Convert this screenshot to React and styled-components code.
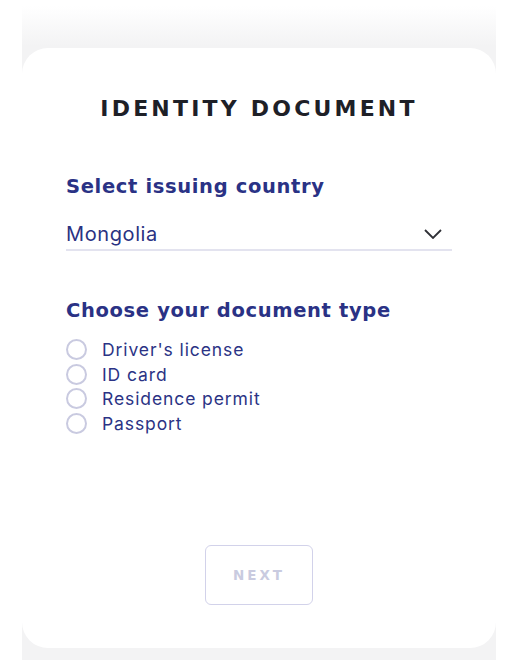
import React, { useState } from 'react';
import styled, { createGlobalStyle } from 'styled-components';

const GlobalStyle = createGlobalStyle`
  html, body {
    margin: 0;
    padding: 0;
    background: #ffffff;
  }
  body {
    font-family: 'Inter', 'Open Sans', sans-serif;
  }
`;

const Page = styled.div`
  width: 522px;
  height: 660px;
  overflow: hidden;
  padding: 0 26px 0 22px;
  box-sizing: border-box;
`;

const Backdrop = styled.div`
  padding: 48px 0 12px;
  background: linear-gradient(to bottom, #ffffff 6px, #f3f3f4 46px);
`;

const Card = styled.div`
  height: 600px;
  background: #ffffff;
  border-radius: 26px;
  padding: 45px 44px 0 44px;
  box-sizing: border-box;
  display: flex;
  flex-direction: column;
`;

const Title = styled.h1`
  margin: 0;
  text-align: center;
  font-family: 'DejaVu Sans', sans-serif;
  font-weight: 700;
  font-size: 22px;
  letter-spacing: 3.2px;
  color: #1e2027;
  line-height: 32px;
`;

const Section = styled.div`
  display: flex;
  flex-direction: column;
  margin-top: ${p => p.$top}px;
`;

const Label = styled.h2`
  margin: 0;
  font-family: 'DejaVu Sans', sans-serif;
  font-weight: 700;
  font-size: 19.5px;
  letter-spacing: 0.65px;
  color: #2a3285;
  line-height: 26px;
`;

const Select = styled.div`
  margin-top: 21px;
  display: flex;
  align-items: center;
  justify-content: space-between;
  border-bottom: 2.5px solid #e3e3ef;
  padding: 0 10px 2px 0;
  font-family: 'Inter', sans-serif;
  font-size: 20px;
  letter-spacing: 0.6px;
  color: #2a3282;
  line-height: 26px;
`;

const Options = styled.div`
  margin-top: 13px;
  display: flex;
  flex-direction: column;
`;

const Option = styled.label`
  display: flex;
  align-items: center;
  gap: 15px;
  height: 24.7px;
  font-family: 'Inter', sans-serif;
  font-size: 17.5px;
  letter-spacing: 0.9px;
  color: #2b3385;
  cursor: pointer;
`;

const Radio = styled.span`
  width: 17px;
  height: 17px;
  border-radius: 50%;
  border: 2.5px solid ${p => (p.$checked ? '#2b3385' : '#c9cae0')};
  flex-shrink: 0;
`;

const Footer = styled.div`
  margin-top: auto;
  padding-bottom: 43px;
  display: flex;
  justify-content: center;
`;

const NextButton = styled.button`
  width: 108px;
  height: 60px;
  background: #ffffff;
  border: 1.5px solid #d2d2ea;
  border-radius: 6px;
  font-family: 'DejaVu Sans', sans-serif;
  font-weight: 700;
  font-size: 13.5px;
  letter-spacing: 3px;
  color: #c9cbe0;
  cursor: default;
`;

const documentTypes = ["Driver's license", 'ID card', 'Residence permit', 'Passport'];

export default function App() {
  const [selected, setSelected] = useState(null);

  return (
    <Page>
      <GlobalStyle />
      <Backdrop>
        <Card>
          <Title>IDENTITY DOCUMENT</Title>
          <Section $top={49}>
            <Label>Select issuing country</Label>
            <Select>
              Mongolia
              <svg width="18" height="10" viewBox="0 0 18 10" fill="none">
                <path d="M1 1l8 8 8-8" stroke="#2f3036" strokeWidth="1.8" />
              </svg>
            </Select>
          </Section>
          <Section $top={47}>
            <Label>Choose your document type</Label>
            <Options>
              {documentTypes.map(t => (
                <Option key={t} onClick={() => setSelected(t)}>
                  <Radio $checked={selected === t} />
                  {t}
                </Option>
              ))}
            </Options>
          </Section>
          <Footer>
            <NextButton disabled={!selected}>NEXT</NextButton>
          </Footer>
        </Card>
      </Backdrop>
    </Page>
  );
}
